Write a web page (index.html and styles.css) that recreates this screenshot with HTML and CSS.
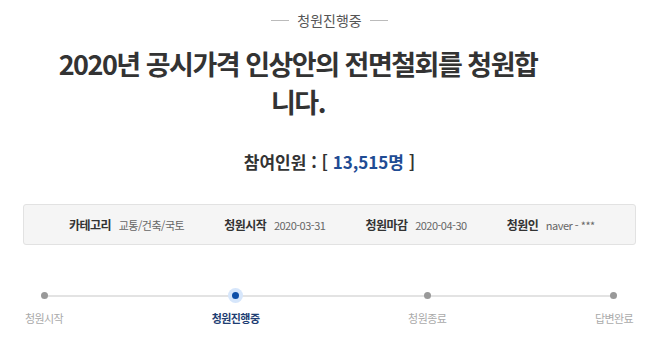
FILE: index.html
```html
<!DOCTYPE html>
<html lang="ko">
<head>
    <meta charset="UTF-8">
    <meta name="viewport" content="width=device-width, initial-scale=1.0">
    <title>청원진행중</title>
    <link rel="stylesheet" href="styles.css">
</head>
<body>

<div class="petition">
    <div class="status-tag"><span class="dash"></span>청원진행중<span class="dash"></span></div>

    <h1 class="petition-title">2020년 공시가격 인상안의 전면철회를 청원합니다.</h1>

    <div class="counter">참여인원 : [ <span class="count">13,515명</span> ]</div>

    <ul class="info-box">
        <li><strong>카테고리</strong> 교통/건축/국토</li>
        <li><strong>청원시작</strong> 2020-03-31</li>
        <li><strong>청원마감</strong> 2020-04-30</li>
        <li><strong>청원인</strong> naver - ***</li>
    </ul>

    <div class="progress">
        <div class="step">
            <span class="dot"></span>
            <span class="step-label">청원시작</span>
        </div>
        <div class="step active">
            <span class="dot"></span>
            <span class="step-label">청원진행중</span>
        </div>
        <div class="step">
            <span class="dot"></span>
            <span class="step-label">청원종료</span>
        </div>
        <div class="step">
            <span class="dot"></span>
            <span class="step-label">답변완료</span>
        </div>
    </div>
</div>

</body>
</html>
```

FILE: styles.css
```css
body {
    font-family: "Noto Sans CJK KR", "Noto Sans", sans-serif;
    margin: 0;
    background: #fff;
    color: #333;
}
.petition {
    padding: 8px 24px 0 23px;
}
.status-tag {
    display: flex;
    justify-content: center;
    align-items: center;
    gap: 8px;
    font-size: 14px;
    color: #555;
    height: 24px;
}
.status-tag .dash {
    width: 18px;
    height: 1px;
    background: #bbb;
}
.petition-title {
    width: 500px;
    margin: 13px 0 0 25px;
    text-align: center;
    font-size: 27px;
    line-height: 38px;
    font-weight: bold;
    letter-spacing: -1.5px;
    color: #333;
}
.counter {
    margin-top: 28px;
    text-align: center;
    font-size: 17px;
    font-weight: bold;
    color: #333;
}
.count {
    color: #1f4c94;
}
.info-box {
    list-style: none;
    margin: 30px 0 0;
    padding: 0 0 0 45px;
    height: 39px;
    display: flex;
    align-items: center;
    gap: 40px;
    background: #f5f5f5;
    border: 1px solid #e2e2e2;
    border-radius: 3px;
    font-size: 11px;
    color: #666;
    letter-spacing: -0.5px;
}
.info-box strong {
    color: #333;
    margin-right: 5px;
    font-size: 12px;
}
.progress {
    margin: 47px 3px 0 2px;
    display: flex;
    justify-content: space-between;
    position: relative;
}
.progress::before {
    content: "";
    position: absolute;
    left: 20px;
    right: 20px;
    top: 3px;
    height: 2px;
    background: #e3e3e3;
}
.step {
    position: relative;
    display: flex;
    flex-direction: column;
    align-items: center;
}
.dot {
    width: 7px;
    height: 7px;
    border-radius: 50%;
    background: #999;
}
.step-label {
    margin-top: 11px;
    font-size: 11px;
    letter-spacing: -0.6px;
    color: #aaa;
    white-space: nowrap;
}
.step.active .dot {
    background: #0d4fa8;
    box-shadow: 0 0 0 4px #d6e6fb;
}
.step.active .step-label {
    color: #1e3e73;
    font-weight: bold;
}
```
